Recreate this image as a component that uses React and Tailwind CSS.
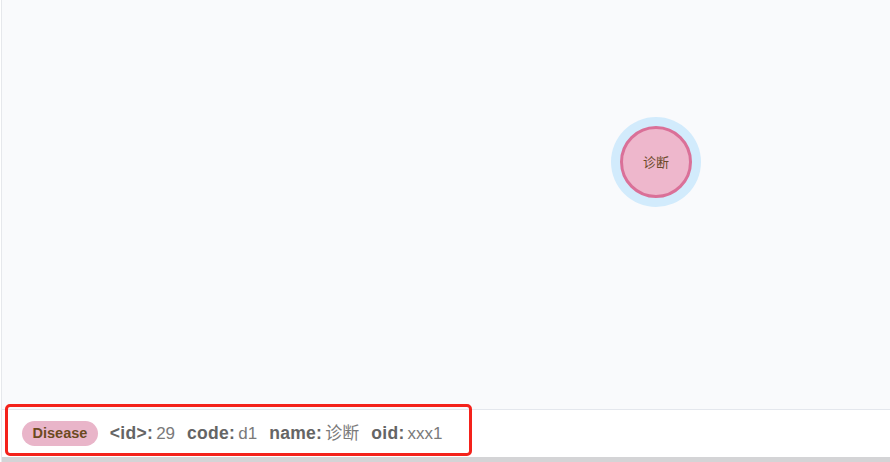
import React from "react";

const fields = [
  { label: "<id>:", value: "29" },
  { label: "code:", value: "d1" },
  { label: "name:", value: "诊断" },
  { label: "oid:", value: "xxx1" },
];

function GraphNode({ x, y, label }) {
  // node sits on the free canvas, x/y is its centre
  return (
    <div
      className="absolute flex h-[90px] w-[90px] items-center justify-center rounded-full bg-[#d2ebfc]"
      style={{ left: x - 45, top: y - 45 }}
    >
      <div className="flex h-[72px] w-[72px] items-center justify-center rounded-full border-[3px] border-[#da7098] bg-[#eeb7cc] pt-[2px] text-[13px] text-[#6b4a2a]">
        {label}
      </div>
    </div>
  );
}

export default function App() {
  return (
    <div
      className="relative h-[462px] w-[890px] overflow-hidden bg-white pl-px"
      style={{ fontFamily: '"Liberation Sans", Arial, "Noto Sans CJK SC", sans-serif' }}
    >
      <div className="flex h-full flex-col border-l border-[#e6e8ec]">
        <div className="relative h-[409px] bg-[#f9fafc]">
          <GraphNode x={654} y={162} label="诊断" />
        </div>
        <div className="flex h-[48px] items-center border-t border-[#e4e7ed] bg-white pl-[20px]">
          <span className="mr-[12px] flex h-[25px] items-center rounded-full bg-[#e9b5c9] px-[10.5px] text-[14.5px] font-bold text-[#6b4a1f]">
            Disease
          </span>
          <div className="flex items-baseline gap-[12px]">
            {fields.map((f) => (
              <span key={f.label} className="flex items-baseline whitespace-nowrap">
                <span className="text-[17.5px] font-bold tracking-[0.3px] text-[#656565]">{f.label}</span>
                <span className="ml-[3px] text-[17px] text-[#7a7a7a]">{f.value}</span>
              </span>
            ))}
          </div>
        </div>
        <div className="h-[5px] bg-[#d4d4d6]" />
      </div>
      {/* annotation box */}
      <div className="pointer-events-none absolute left-[5px] top-[404px] h-[52px] w-[467px] rounded-[5px] border-[3px] border-[#f4221b]" />
    </div>
  );
}
